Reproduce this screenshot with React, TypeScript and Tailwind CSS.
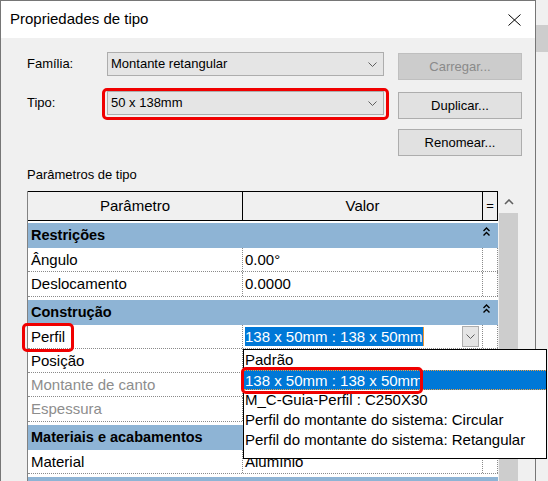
import React from 'react';

const Chevron = ({ className = '' }: { className?: string }) => (
  <svg width="9" height="5" viewBox="0 0 9 5" className={className}>
    <path d="M0.5 0.5 L4.5 4.5 L8.5 0.5" fill="none" stroke="#5f5f5f" strokeWidth="1" />
  </svg>
);

const CollapseIcon = () => (
  <svg width="7" height="9" viewBox="0 0 7 9" className="mt-[4px]">
    <path d="M0.5 4 L3.5 1 L6.5 4 M0.5 8.5 L3.5 5.5 L6.5 8.5" fill="none" stroke="#000" strokeWidth="1.4" />
  </svg>
);

// red annotation frame drawn over a control
const RedMark = ({ className }: { className: string }) => (
  <span className={`pointer-events-none absolute z-30 rounded-[5px] border-[3px] border-[#f00000] ${className}`} />
);

const DropField = ({ value, marked = false }: { value: string; marked?: boolean }) => (
  <div className="relative flex h-[24px] w-[277px] items-center border border-[#adadad] bg-[#e5e5e5] pl-[3px] pr-[6px]">
    <span className="flex-1 text-[13px] text-black">{value}</span>
    <Chevron />
    {marked && <RedMark className="left-[-6px] top-[-4px] h-[32px] w-[287px]" />}
  </div>
);

const DlgButton = ({ label, disabled = false, className = '' }: { label: string; disabled?: boolean; className?: string }) => (
  <div
    className={`flex h-[27px] w-[124px] items-center justify-center border text-[13px] ${
      disabled ? 'border-[#bfbfbf] bg-[#cccccc] text-[#8a8a8a]' : 'border-[#adadad] bg-[#e1e1e1] text-black'
    } ${className}`}
  >
    {label}
  </div>
);

const GroupRow = ({ label }: { label?: string }) => (
  <div className="flex h-[25px] bg-[#8eb4d5]">
    <div className="flex-1 pl-[3px] text-[14.5px] font-bold leading-[25px] text-black">{label}</div>
    <div className="w-[15px]">
      <CollapseIcon />
    </div>
  </div>
);

const Gap = ({ className }: { className: string }) => <div className={`bg-white ${className}`} />;

const ParamRow = ({
  label,
  value,
  muted = false,
  tall = false,
  labelExtra,
  children,
}: {
  label: string;
  value?: string;
  muted?: boolean;
  tall?: boolean;
  labelExtra?: React.ReactNode;
  children?: React.ReactNode;
}) => (
  <div className={`flex border-b border-dotted border-[#8a8a8a] bg-white text-[15px] ${tall ? 'h-[25px]' : 'h-[24px]'}`}>
    <div
      className={`relative w-[215px] border-r border-dotted border-[#8a8a8a] pl-[3px] leading-[23px] ${
        muted ? 'text-[#8d8d8d]' : 'text-black'
      }`}
    >
      {label}
      {labelExtra}
    </div>
    <div className="relative w-[240px] border-r border-dotted border-[#8a8a8a] pl-[2px] leading-[23px] text-black">
      {children ?? value}
    </div>
    <div className="w-[15px] border-r border-dotted border-[#8a8a8a]" />
  </div>
);

const profiles = [
  'Padrão',
  '138 x 50mm : 138 x 50mm',
  'M_C-Guia-Perfil : C250X30',
  'Perfil do montante do sistema: Circular',
  'Perfil do montante do sistema: Retangular',
];

const ProfileCombo = () => (
  <>
    <div className="flex h-full items-start">
      <span className="mt-[2px] h-[19px] border-r border-[#f0962e] bg-[#0078d7] leading-[19px] text-white">
        138 x 50mm : 138 x 50mm
      </span>
      <span className="ml-auto mr-[3px] mt-[1px] flex h-[21px] w-[17px] items-center justify-center border border-[#adadad] bg-[#e5e5e5]">
        <Chevron />
      </span>
    </div>
    <div className="absolute left-0 top-[24px] z-20 h-[110px] w-[304px] border border-black bg-white">
      {profiles.map((p, i) => (
        <div
          key={p}
          className={`h-[20px] pl-[1px] leading-[20px] ${
            i === 1 ? 'border-y border-dotted border-[#f0a040] bg-[#0078d7] leading-[18px] text-white' : 'text-black'
          }`}
        >
          {p}
        </div>
      ))}
      <RedMark className="left-[-3px] top-[17px] h-[27px] w-[182px]" />
    </div>
  </>
);

const ParamsTable = () => (
  <div className="flex flex-1">
    <div className="flex w-[471px] flex-col border-l border-[#828282] bg-white">
      <div className="flex h-[30px] border-y border-black bg-[#f0f0f0] text-[15px] text-black">
        <div className="flex w-[215px] items-center justify-center border-r border-black">Parâmetro</div>
        <div className="flex w-[240px] items-center justify-center border-r border-black">Valor</div>
        <div className="flex w-[15px] items-center justify-center border-r border-black text-[13px]">=</div>
      </div>
      <Gap className="h-[2px]" />
      <GroupRow label="Restrições" />
      <ParamRow label="Ângulo" value="0.00°" />
      <ParamRow label="Deslocamento" value="0.0000" tall />
      <Gap className="h-[3px]" />
      <GroupRow label="Construção" />
      <ParamRow label="Perfil" labelExtra={<RedMark className="left-[-6px] top-[-2px] h-[29px] w-[52px]" />}>
        <ProfileCombo />
      </ParamRow>
      <ParamRow label="Posição" />
      <ParamRow label="Montante de canto" muted />
      <ParamRow label="Espessura" muted tall />
      <Gap className="h-[3px]" />
      <GroupRow label="Materiais e acabamentos" />
      <ParamRow label="Material" value="Alumínio" />
      <Gap className="h-[3px]" />
      <GroupRow />
    </div>
    {/* vertical scrollbar */}
    <div className="flex w-[22px] flex-col bg-[#f0f0f0] pl-[1px]">
      <div className="flex h-[22px] items-center justify-center pr-[1px]">
        <svg width="10" height="6" viewBox="0 0 10 6">
          <path d="M1 5 L5 1 L9 5" fill="none" stroke="#606060" strokeWidth="1.6" />
        </svg>
      </div>
      <div className="w-[19px] flex-1 bg-[#cdcdcd]" />
    </div>
  </div>
);

export default function App() {
  return (
    <div className="flex h-[481px] w-[548px] overflow-hidden bg-[#f0f0f0] font-['Liberation_Sans',Arial,sans-serif]">
      <div className="flex h-[520px] w-[536px] shrink-0 flex-col border-x border-t border-[#767676] bg-[#f0f0f0]">
        <div className="flex h-[37px] items-center justify-between bg-white pl-[9px] pr-[14px]">
          <span className="text-[15px] text-black">Propriedades de tipo</span>
          <svg width="13" height="12" viewBox="0 0 13 12">
            <path d="M0.5 0.5 L12.5 11.5 M12.5 0.5 L0.5 11.5" stroke="#000" strokeWidth="1" />
          </svg>
        </div>

        <div className="flex flex-1 flex-col pl-[26px] pt-[14px]">
          <div className="flex h-[38px] w-[495px] items-start">
            <span className="w-[80px] text-[13px] leading-[24px] text-black">Família:</span>
            <DropField value="Montante retangular" />
            <DlgButton label="Carregar..." disabled className="ml-[14px] mt-[1px]" />
          </div>
          <div className="flex h-[38px] w-[495px] items-start">
            <span className="mt-[1px] w-[80px] text-[13px] leading-[24px] text-black">Tipo:</span>
            <div className="mt-[1px]">
              <DropField value="50 x 138mm" marked />
            </div>
            <DlgButton label="Duplicar..." className="ml-[14px] mt-[2px]" />
          </div>
          <div className="flex h-[29px] w-[495px] justify-end pt-[1px]">
            <DlgButton label="Renomear..." />
          </div>

          <div className="mt-[10px] text-[13px] leading-[16px] text-black">Parâmetros de tipo</div>
          <div className="mt-[8px] flex flex-1">
            <ParamsTable />
          </div>
        </div>
      </div>

      <div className="flex flex-1 flex-col">
        <div className="h-[25px] bg-[#f0f0f0]" />
        <div className="h-[27px] bg-[#cdcdcd]" />
        <div className="flex-1 bg-[#f0f0f0]" />
      </div>
    </div>
  );
}
